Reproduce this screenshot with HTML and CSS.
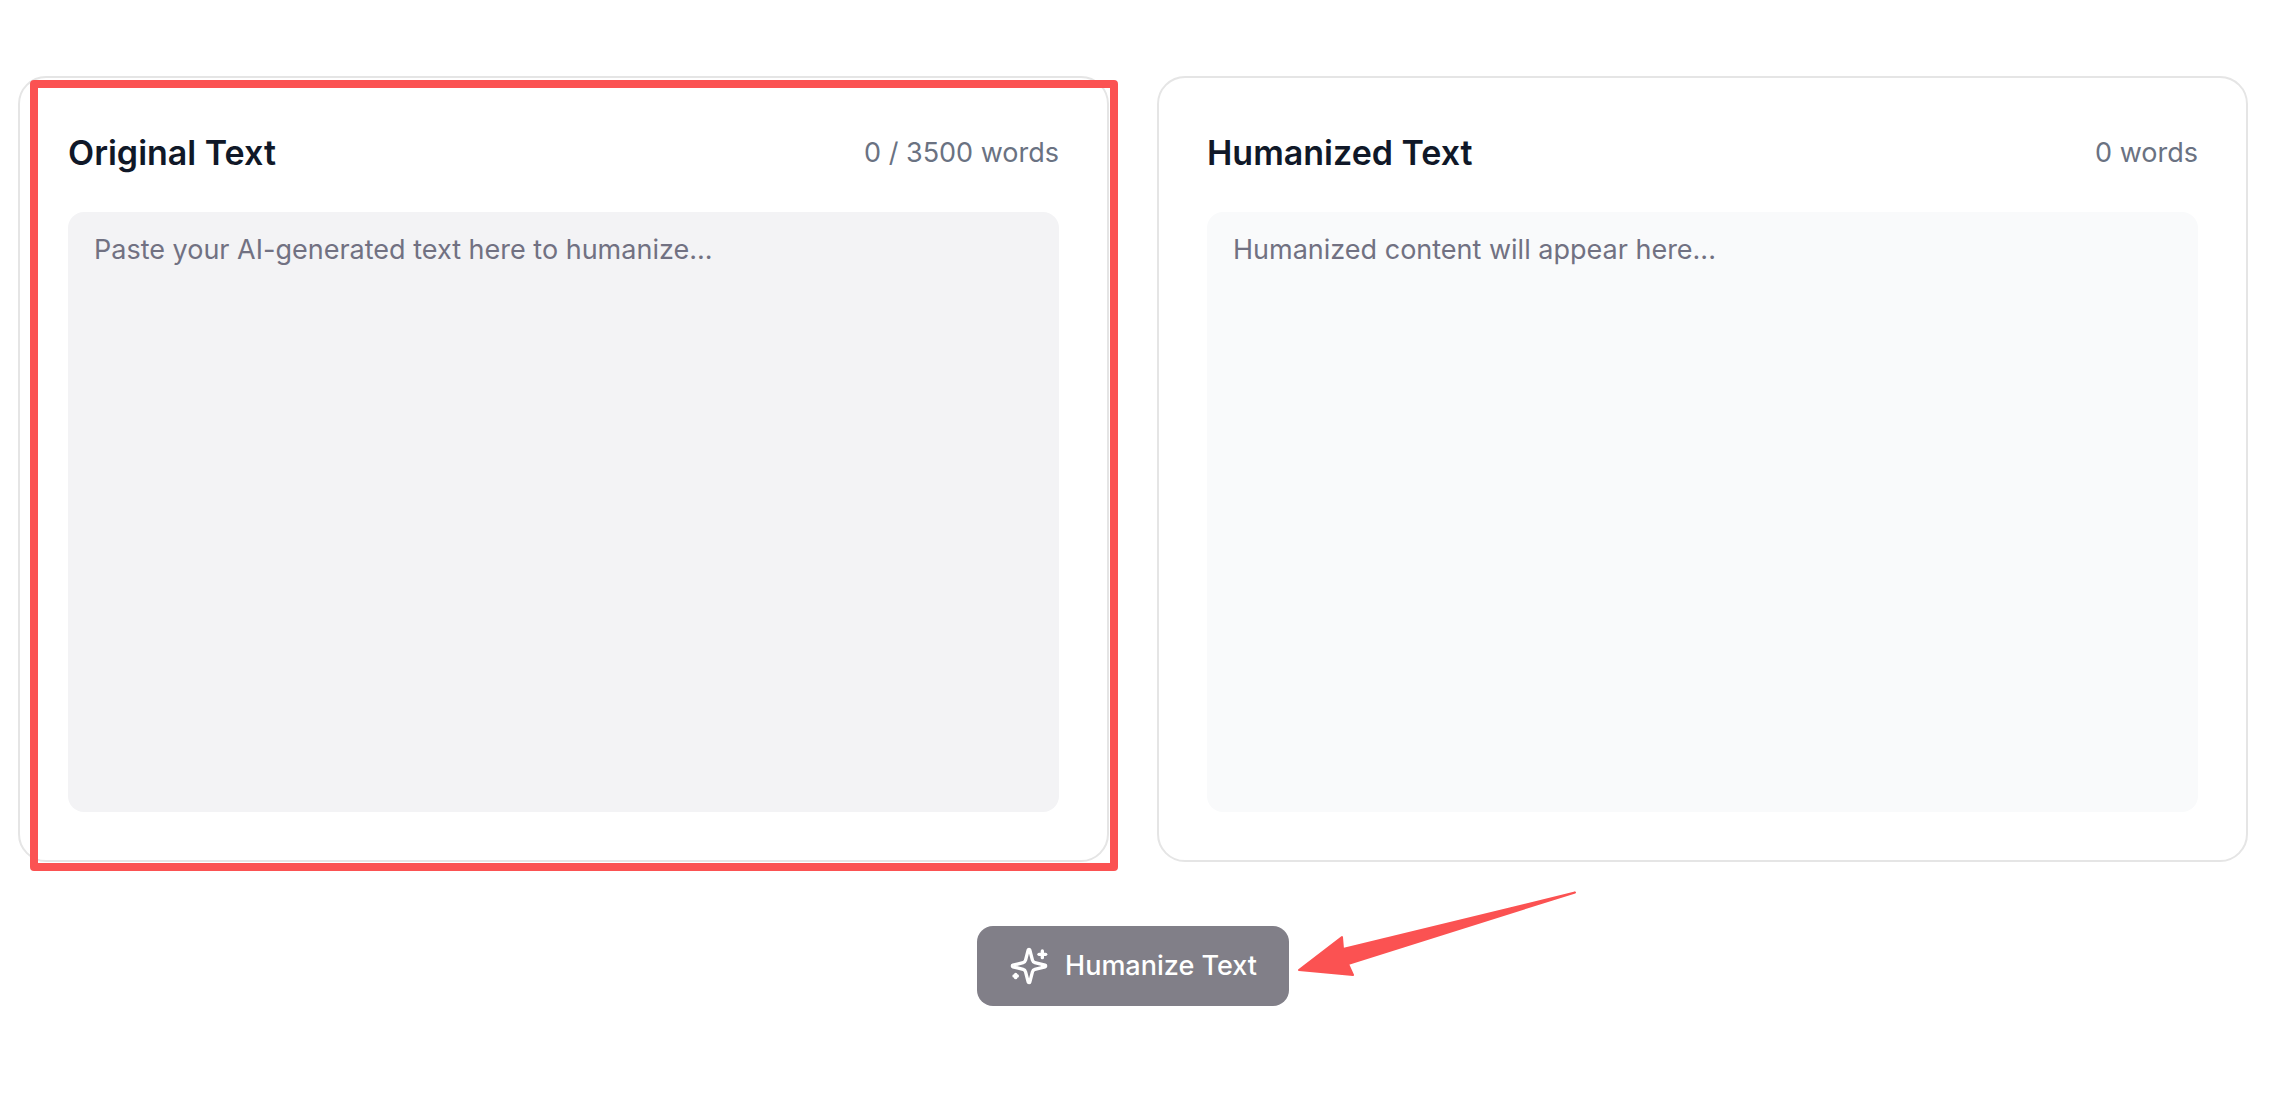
FILE: index.html
```html
<!DOCTYPE html>
<html lang="en">
<head>
  <meta charset="UTF-8" />
  <meta name="viewport" content="width=device-width, initial-scale=1.0"/>
  <title>Humanize Text</title>
  <link rel="stylesheet" href="styles.css">
</head>
<body>

  <main>
    <div class="panels">
      <section class="card">
        <div class="card-header">
          <h2><label for="original-text">Original Text</label></h2>
          <span class="word-count">0 / 3500 words</span>
        </div>
        <textarea id="original-text" placeholder="Paste your AI-generated text here to humanize..."></textarea>
        <div class="highlight"></div>
      </section>

      <section class="card">
        <div class="card-header">
          <h2><label for="humanized-text">Humanized Text</label></h2>
          <span class="word-count">0 words</span>
        </div>
        <textarea id="humanized-text" class="output" placeholder="Humanized content will appear here..." readonly></textarea>
      </section>
    </div>

    <div class="actions">
      <button type="button" class="humanize-btn">
        <svg class="icon" viewBox="0 0 24 24" aria-hidden="true">
          <path d="M9.937 15.5A2 2 0 0 0 8.5 14.063l-6.135-1.582a.5.5 0 0 1 0-.962L8.5 9.936A2 2 0 0 0 9.937 8.5l1.582-6.135a.5.5 0 0 1 .963 0L14.063 8.5A2 2 0 0 0 15.5 9.937l6.135 1.581a.5.5 0 0 1 0 .964L15.5 14.063a2 2 0 0 0-1.437 1.437l-1.582 6.135a.5.5 0 0 1-.963 0z"/>
          <path d="M20 3v4"/>
          <path d="M22 5h-4"/>
          <path d="M4 17v2"/>
          <path d="M5 18H3"/>
        </svg>
        Humanize Text
      </button>
      <svg class="arrow" viewBox="0 0 282 90" aria-hidden="true">
        <path d="M3 82 46 49 47 61 279 4.500 52 76 57 87z"/>
      </svg>
    </div>
  </main>

</body>
</html>
```

FILE: styles.css
```css
* {
  margin: 0;
  padding: 0;
  box-sizing: border-box;
}

body {
  font-family: Inter, 'Liberation Sans', sans-serif;
  background-color: #fff;
  color: #101828;
}

main {
  padding: 76px 32px 64px 18px;
}

.panels {
  display: grid;
  grid-template-columns: 1fr 1fr;
  gap: 48px;
}

.card {
  position: relative;
  padding: 48px;
  background-color: #fff;
  border: 2px solid #e5e5e5;
  border-radius: 28px;
}

.card-header {
  display: flex;
  justify-content: space-between;
  align-items: center;
  margin-bottom: 32px;
}

.card-header h2 {
  font-size: 34px;
  font-weight: 600;
  line-height: 54px;
}

.word-count {
  font-size: 27px;
  line-height: 40px;
  color: #6a7282;
}

textarea {
  display: block;
  width: 100%;
  height: 600px;
  padding: 18px 26px;
  border: none;
  border-radius: 16px;
  outline: none;
  resize: none;
  font-family: inherit;
  font-size: 27px;
  line-height: 40px;
  color: #101828;
  background-color: #f3f3f5;
}

textarea.output {
  background-color: #f9fafb;
}

textarea::placeholder {
  color: #717182;
  opacity: 1;
}

/* red frame around the input card */
.highlight {
  position: absolute;
  top: 2px;
  left: 10px;
  right: -11px;
  bottom: -11px;
  border: 8px solid #fb5252;
  border-radius: 4px;
  pointer-events: none;
}

.actions {
  position: relative;
  width: fit-content;
  margin: 64px auto 0;
}

.humanize-btn {
  display: flex;
  align-items: center;
  gap: 16px;
  height: 80px;
  padding: 0 32px;
  border: none;
  border-radius: 16px;
  font-family: inherit;
  font-size: 27px;
  font-weight: 500;
  line-height: 40px;
  color: #fff;
  background-color: #817f88;
}

.icon {
  width: 40px;
  height: 40px;
  fill: none;
  stroke: currentColor;
  stroke-width: 2;
  stroke-linecap: round;
  stroke-linejoin: round;
}

.arrow {
  position: absolute;
  top: -38px;
  left: calc(100% + 7px);
  width: 282px;
  height: 90px;
  fill: #fb5252;
  stroke: #fb5252;
  stroke-width: 2;
  stroke-linejoin: round;
}
```
